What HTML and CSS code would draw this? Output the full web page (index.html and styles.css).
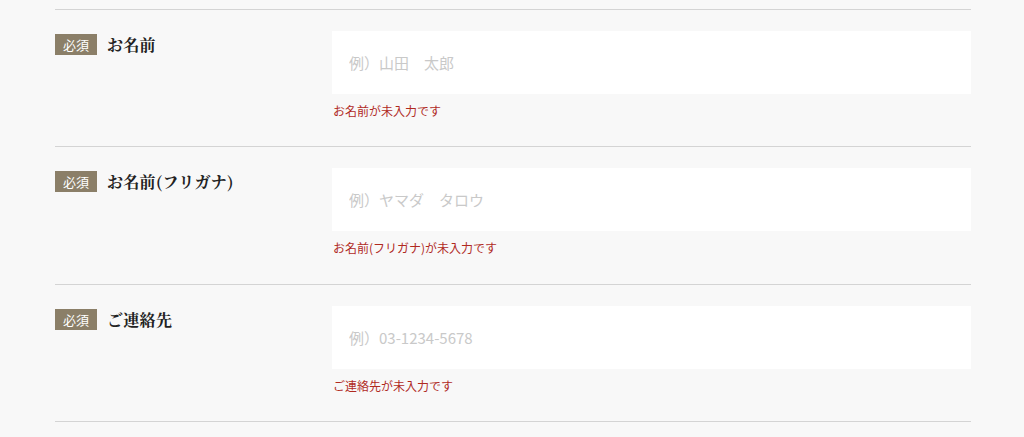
FILE: index.html
```html
<!DOCTYPE html>
<html lang="ja">
<head>
    <meta charset="UTF-8">
    <meta name="viewport" content="width=device-width, initial-scale=1.0">
    <title>お問い合わせ</title>
    <link rel="stylesheet" href="styles.css">
</head>
<body>

    <form class="form">
        <div class="row">
            <div class="label">
                <span class="badge">必須</span>
                <span class="label-text">お名前</span>
            </div>
            <div class="field">
                <input class="input" type="text" placeholder="例）山田　太郎">
                <p class="error">お名前が未入力です</p>
            </div>
        </div>
        <div class="row">
            <div class="label">
                <span class="badge">必須</span>
                <span class="label-text">お名前(フリガナ)</span>
            </div>
            <div class="field">
                <input class="input" type="text" placeholder="例）ヤマダ　タロウ">
                <p class="error">お名前(フリガナ)が未入力です</p>
            </div>
        </div>
        <div class="row">
            <div class="label">
                <span class="badge">必須</span>
                <span class="label-text">ご連絡先</span>
            </div>
            <div class="field">
                <input class="input" type="tel" placeholder="例）03-1234-5678">
                <p class="error">ご連絡先が未入力です</p>
            </div>
        </div>
    </form>

</body>
</html>
```

FILE: styles.css
```css
body {
    font-family: "Noto Sans CJK JP", "Noto Sans", sans-serif;
    background-color: #f8f8f8;
    margin: 0;
    padding: 9px 0 0;
    color: #222;
}
.form {
    width: 916px;
    margin-left: 55px;
    border-bottom: 1px solid #d4d4d4;
}
.row {
    display: grid;
    grid-template-columns: 277px 1fr;
    border-top: 1px solid #d4d4d4;
    padding: 21px 0 26.25px;
}
.label {
    display: flex;
    align-items: center;
    gap: 10px;
    margin-top: 3px;
    height: 21px;
}
.badge {
    display: inline-block;
    width: 42px;
    height: 21px;
    line-height: 21px;
    text-align: center;
    background-color: #8b7f68;
    color: #fff;
    font-size: 13px;
}
.label-text {
    font-family: "Noto Serif CJK JP", "Liberation Serif", "Noto Sans CJK JP", serif;
    font-weight: bold;
    font-size: 16px;
    letter-spacing: 0.3px;
    color: #222;
}
.field {
    display: flex;
    flex-direction: column;
}
.input {
    box-sizing: border-box;
    width: 100%;
    height: 63px;
    border: none;
    background-color: #fff;
    padding: 0 17px;
    font-family: "Noto Sans CJK JP", "Noto Sans", sans-serif;
    font-size: 15px;
    outline: none;
}
.input::placeholder {
    color: #c9c9c9;
}
.error {
    margin: 8px 0 0 1px;
    line-height: 18px;
    font-size: 12px;
    color: #b02a1f;
}
```
